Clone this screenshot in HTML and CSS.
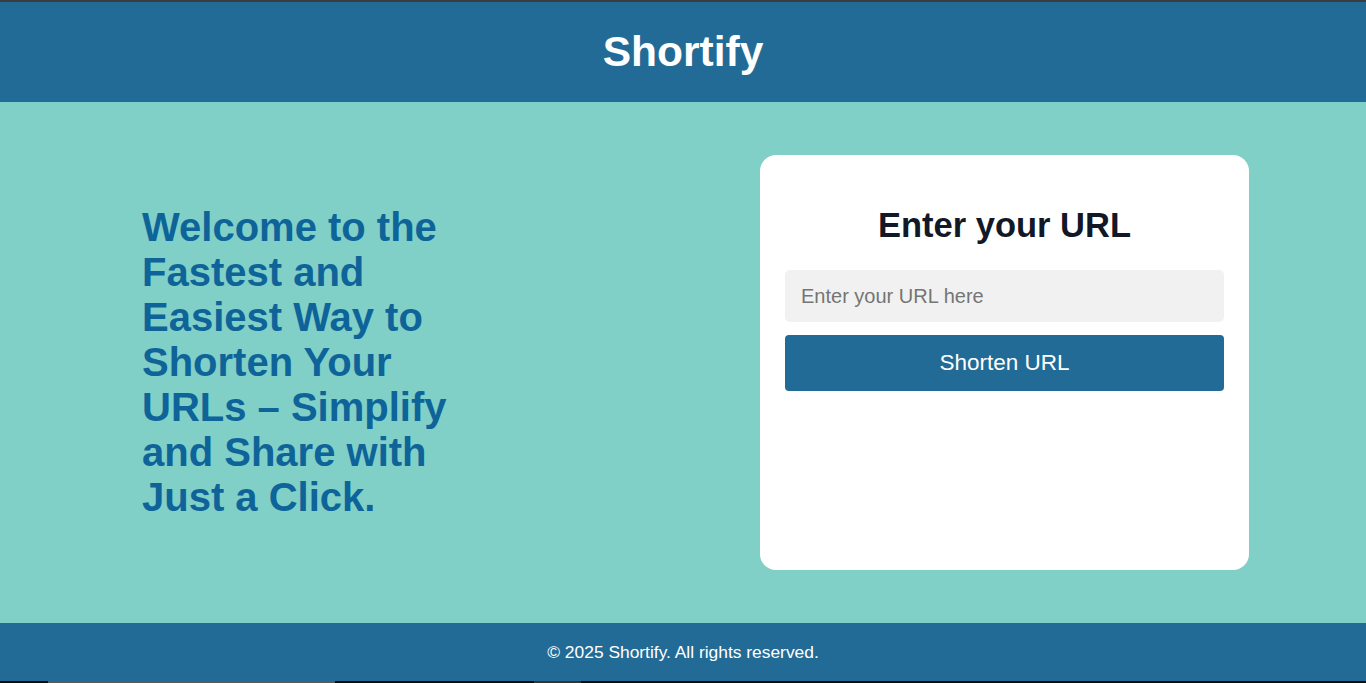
FILE: index.html
```html
<!DOCTYPE html>
<html lang="en">
<head>
<meta charset="utf-8">
<title>Shortify</title>
<link rel="stylesheet" href="styles.css">
</head>
<body>
<div class="topline"></div>
<header class="site-header">
  <h1 class="brand">Shortify</h1>
</header>
<main class="main">
  <section class="intro">
    <h2 class="intro-text">Welcome to the Fastest and Easiest Way to Shorten Your URLs – Simplify and Share with Just a Click.</h2>
  </section>
  <section class="card">
    <h2 class="card-title">Enter your URL</h2>
    <form class="form">
      <input class="url-input" type="text" placeholder="Enter your URL here">
      <button class="submit" type="button">Shorten URL</button>
    </form>
  </section>
</main>
<footer class="site-footer">
  <p class="copy">© 2025 Shortify. All rights reserved.</p>
</footer>
<div class="bottomline">
  <span class="seg seg-a"></span>
  <span class="seg seg-b"></span>
  <span class="seg seg-c"></span>
  <span class="seg seg-d"></span>
</div>
</body>
</html>
```

FILE: styles.css
```css
* { box-sizing: border-box; }

html, body {
  margin: 0;
  padding: 0;
}

body {
  font-family: "Liberation Sans", Arial, sans-serif;
  background: #80d0c7;
  height: 683px;
  display: flex;
  flex-direction: column;
  overflow: hidden;
}

.topline {
  height: 2px;
  background: #3a3c3e;
  flex: none;
}

.site-header {
  height: 100px;
  background: #226b96;
  display: flex;
  align-items: center;
  justify-content: center;
  flex: none;
}

.brand {
  margin: 0;
  color: #ffffff;
  font-size: 42.5px;
  font-weight: bold;
  line-height: 1;
}

.main {
  height: 521px;
  flex: none;
  display: flex;
  align-items: center;
  justify-content: space-between;
  padding: 0 117px 0 142px;
}

.intro {
  width: 330px;
}

.intro-text {
  margin: 0;
  color: #0e6499;
  font-size: 40px;
  line-height: 45px;
  font-weight: bold;
}

.card {
  width: 489px;
  height: 415px;
  background: #ffffff;
  border-radius: 16px;
  padding: 25px;
}

.card-title {
  margin: 26.5px 0;
  text-align: center;
  color: #111827;
  font-size: 34.5px;
  font-weight: bold;
  line-height: 37px;
}

.form {
  display: flex;
  flex-direction: column;
  gap: 13px;
}

.url-input {
  height: 52px;
  width: 100%;
  border: none;
  border-radius: 5px;
  background: #f1f1f1;
  padding: 0 16px;
  font-family: "Liberation Sans", Arial, sans-serif;
  font-size: 20px;
  color: #333;
  outline: none;
}

.url-input::placeholder {
  color: #757575;
}

.submit {
  height: 56px;
  width: 100%;
  border: none;
  border-radius: 4px;
  background: #226b96;
  color: #ffffff;
  font-family: "Liberation Sans", Arial, sans-serif;
  font-size: 22.5px;
  cursor: pointer;
}

.site-footer {
  height: 58px;
  flex: none;
  background: #226b96;
  display: flex;
  align-items: center;
  justify-content: center;
}

.copy {
  margin: 0;
  color: #ffffff;
  font-size: 17.4px;
}

.bottomline {
  height: 2px;
  flex: none;
  background: #0c0c0c;
  display: flex;
}

.seg { display: block; height: 2px; }
.seg-a { width: 48px; }
.seg-b { width: 287px; background: #5a5a5a; }
.seg-c { width: 199px; }
.seg-d { width: 47px; background: #333333; }
```
